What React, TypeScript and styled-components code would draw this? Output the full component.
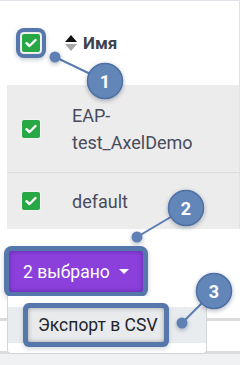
import React from "react";
import styled, { createGlobalStyle } from "styled-components";

const GlobalStyle = createGlobalStyle`
  html, body {
    margin: 0;
    padding: 0;
    background: #ffffff;
  }
  body {
    width: 240px;
    height: 365px;
    overflow: hidden;
    font-family: Roboto, "Noto Sans", sans-serif;
  }
`;

const RING = "#5577ab";

const Page = styled.div`
  position: relative;
  width: 240px;
  height: 365px;
  border-top: 1px solid #dfe2e6;
  box-sizing: border-box;
  background: #f0f1f3;
  overflow: hidden;
`;

const Top = styled.div`
  background: #ffffff;
`;

const Table = styled.div`
  margin-left: 7px;
  border-right: 1px solid #e2e2e2;
`;

const HeaderRow = styled.div`
  height: 84px;
  display: flex;
  align-items: center;
  padding-left: 13px;
  background: #ffffff;
`;

const Row = styled.div<{ $h: number; $last?: boolean }>`
  height: ${(p) => p.$h}px;
  display: flex;
  align-items: center;
  padding-left: 15px;
  background: #ececec;
  border-bottom: ${(p) => (p.$last ? "none" : "1px solid #dcdcdc")};
  box-sizing: border-box;
`;

const Check = styled.span`
  width: 18px;
  height: 18px;
  border-radius: 2px;
  background: #28a745;
  box-shadow: 0 0 0 1px #f2f2f2;
  display: flex;
  align-items: center;
  justify-content: center;
  flex-shrink: 0;
`;

const HeaderCheck = styled.span`
  padding: 2px;
  border-radius: 4px;
  background: #e8ebe8;
  box-shadow: 0 0 0 4px ${RING}, 0 2px 4px 4px rgba(40, 60, 90, 0.25);
  display: flex;
`;

const SortIcon = styled.span`
  margin-left: 23px;
  display: flex;
  flex-direction: column;
  gap: 2px;
`;

const HeadTitle = styled.span`
  margin-left: 6px;
  font-size: 17px;
  font-weight: 700;
  color: #3d424e;
`;

const CellText = styled.div`
  margin-left: 32px;
  width: 135px;
  font-size: 18px;
  line-height: 27px;
  color: #474b5b;
`;

const Toolbar = styled.div`
  height: 89px;
  padding: 22px 0 0 9px;
  box-sizing: border-box;
  background: #ffffff;
`;

const DropWrap = styled.div`
  position: relative;
  display: inline-block;
`;

const SelectButton = styled.button`
  height: 41px;
  width: 134px;
  border: none;
  border-radius: 3px;
  background: #8b40dc;
  color: #ffffff;
  font-family: Roboto, sans-serif;
  font-size: 17.5px;
  display: flex;
  align-items: center;
  padding: 0 0 0 14px;
  gap: 9px;
  box-shadow: 0 0 0 5px ${RING}, inset 0 0 5px rgba(60, 20, 120, 0.55),
    0 2px 5px 5px rgba(40, 60, 90, 0.25);
`;

const Caret = styled.span`
  width: 0;
  height: 0;
  border-left: 5px solid transparent;
  border-right: 5px solid transparent;
  border-top: 5px solid #ffffff;
`;

const Menu = styled.div`
  position: absolute;
  top: 45px;
  left: -2px;
  width: 200px;
  box-sizing: border-box;
  padding: 11px 0 10px;
  background: #ffffff;
  border: 1px solid #d5d5d5;
  border-top: none;
  border-radius: 0 0 4px 4px;
  z-index: 2;
`;

const MenuItem = styled.div`
  height: 36px;
  background: #e9ecef;
  display: flex;
  align-items: center;
  padding-left: 20px;
`;

const ItemLabel = styled.span`
  height: 34px;
  display: flex;
  align-items: center;
  padding: 0 6px 0 10px;
  border-radius: 2px;
  background: #e9eaec;
  font-size: 17.5px;
  color: #212529;
  box-shadow: 0 0 0 5px ${RING}, inset 0 0 5px rgba(0, 0, 0, 0.3),
    0 2px 5px 5px rgba(40, 60, 90, 0.2);
`;

const Footer = styled.div`
  height: 30px;
  border-top: 3px solid #dcdcdc;
  border-bottom: 3px solid #dcdcdc;
  background: #ffffff;
`;

const Callouts = styled.svg`
  position: absolute;
  left: 0;
  top: -1px;
  pointer-events: none;
  z-index: 5;
`;

const CheckMark = () => (
  <svg width="12" height="10" viewBox="0 0 12 10">
    <path d="M1.5 5.2 L4.5 8 L10.5 2" stroke="#fff" strokeWidth="2.4" fill="none" strokeLinecap="round" strokeLinejoin="round" />
  </svg>
);

const Tri = ({ up, color }: { up?: boolean; color: string }) => (
  <svg width="12" height="7" viewBox="0 0 12 7">
    <path d={up ? "M6 0 L12 7 L0 7 Z" : "M0 0 L12 0 L6 7 Z"} fill={color} />
  </svg>
);

const callouts = [
  { n: "1", dot: [55, 57], c: [105, 81] },
  { n: "2", dot: [137, 237], c: [186, 208] },
  { n: "3", dot: [182, 323], c: [214, 291] },
];

export default function App() {
  return (
    <>
      <GlobalStyle />
      <Page>
        <Top>
          <Table>
            <HeaderRow>
              <HeaderCheck>
                <Check>
                  <CheckMark />
                </Check>
              </HeaderCheck>
              <SortIcon>
                <Tri up color="#111" />
                <Tri color="#a8a8a8" />
              </SortIcon>
              <HeadTitle>Имя</HeadTitle>
            </HeaderRow>
            <Row $h={88}>
              <Check>
                <CheckMark />
              </Check>
              <CellText>EAP-test_AxelDemo</CellText>
            </Row>
            <Row $h={56} $last>
              <Check>
                <CheckMark />
              </Check>
              <CellText>default</CellText>
            </Row>
          </Table>
        </Top>
        <Toolbar>
          <DropWrap>
            <SelectButton>
              2 выбрано <Caret />
            </SelectButton>
            <Menu>
              <MenuItem>
                <ItemLabel>Экспорт в CSV</ItemLabel>
              </MenuItem>
            </Menu>
          </DropWrap>
        </Toolbar>
        <Footer />

        <Callouts width="240" height="366" viewBox="0 0 240 366">
          <defs>
            <filter id="sh" x="-50%" y="-50%" width="200%" height="200%">
              <feDropShadow dx="0" dy="1.5" stdDeviation="2" floodColor="#1c2a44" floodOpacity="0.35" />
            </filter>
          </defs>
          {callouts.map((k) => (
            <g key={k.n}>
              <line x1={k.dot[0]} y1={k.dot[1]} x2={k.c[0]} y2={k.c[1]} stroke="#5a7cb0" strokeWidth="2" />
              <circle cx={k.dot[0]} cy={k.dot[1]} r="5.5" fill="#5f80b4" filter="url(#sh)" />
              <circle cx={k.c[0]} cy={k.c[1]} r="17.5" fill="#6486b9" stroke="#4f70a4" strokeWidth="1.5" filter="url(#sh)" />
              <text
                x={k.c[0]}
                y={k.c[1] + 6.5}
                textAnchor="middle"
                fontFamily="Roboto, sans-serif"
                fontWeight="700"
                fontSize="18"
                fill="#ffffff"
              >
                {k.n}
              </text>
            </g>
          ))}
        </Callouts>
      </Page>
    </>
  );
}
